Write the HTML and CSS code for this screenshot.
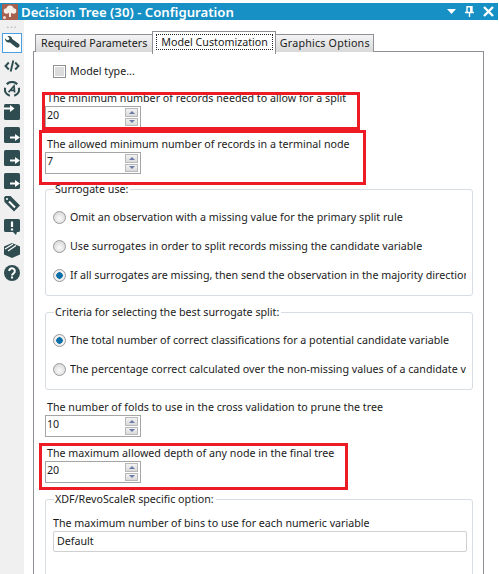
FILE: index.html
```html
<!DOCTYPE html>
<html lang="en">
<head>
<meta charset="utf-8">
<title>Decision Tree (30) - Configuration</title>
<link rel="stylesheet" href="styles.css">
</head>
<body>
<div class="window">
  <header class="titlebar">
    <svg class="logo" viewBox="0 0 16 16"><rect width="16" height="16" rx="1" fill="#a8604e"/><circle cx="8" cy="5" r="3.500" fill="#f4efe9"/><circle cx="4.500" cy="7" r="2.800" fill="#f4efe9"/><circle cx="11.500" cy="7" r="2.800" fill="#f4efe9"/><path d="M7 8h2v5H7z" fill="#f4efe9"/><circle cx="2.500" cy="13.500" r="1.500" fill="#e9dcd2"/></svg>
    <h1 class="title">Decision Tree (30) - Configuration</h1>
    <div class="winbtns">
      <svg width="9" height="5" viewBox="0 0 9 5"><path d="M0 0h9L4.500 5z" fill="#fff"/></svg>
      <svg width="9" height="11" viewBox="0 0 9 11"><path d="M2 .7h5v5.800H2zM0 6.500h9M4.500 7v4M5.700 1v5" stroke="#fff" stroke-width="1.400" fill="none"/></svg>
      <svg width="11" height="11" viewBox="0 0 11 11"><path d="M1 1l9 9M10 1l-9 9" stroke="#fff" stroke-width="2.400" fill="none"/></svg>
    </div>
  </header>
  <div class="body">
    <nav class="rail">
      <div class="grip">...</div>
      <div class="rail-btn active"><svg viewBox="0 0 16 16"><path d="M1 3.200L3 5.300 5 4.800 5.500 3 3.400 1.200C5.500.3 8 1.500 8.200 4L14.700 8.800C16 9.800 15.800 11.500 14.800 12.300 13.800 13 12.600 13 11.600 12L6 7.500C3.500 8 .8 6 1 3.200z" fill="#2f4d50"/></svg></div>
      <div class="rail-btn"><svg viewBox="0 0 16 16"><path d="M4.800 4.500L1.500 8l3.300 3.500M11.200 4.500L14.500 8l-3.300 3.500M9.300 2.500l-2.600 11" stroke="#2f4d50" stroke-width="1.900" fill="none"/></svg></div>
      <div class="rail-btn"><svg viewBox="0 0 16 16"><path d="M2.800 3.300A7 7 0 0 1 13.200 3.300M15 6.800A7 7 0 0 1 10.200 14.700M5.800 14.700A7 7 0 0 1 1 6.800" stroke="#2f4d50" stroke-width="2.200" fill="none"/><path d="M4.500 11.200L10 5l.6 6.500M6.500 9.300h4" stroke="#2f4d50" stroke-width="1.700" fill="none"/></svg></div>
      <div class="rail-btn"><svg viewBox="0 0 16 16"><rect width="16" height="16" rx="1.500" fill="#2f4d50"/><path d="M0 3.500h6V1l4.500 3.500L6 8V5.500H0z" fill="#fff"/></svg></div>
      <div class="rail-btn"><svg viewBox="0 0 16 16"><rect width="16" height="16" rx="1.500" fill="#2f4d50"/><path d="M6 9.500h5V7l5 3.500-5 3.500v-2.500H6z" fill="#fff"/></svg></div>
      <div class="rail-btn"><svg viewBox="0 0 16 16"><rect width="16" height="16" rx="1.500" fill="#2f4d50"/><path d="M6 9.500h5V7l5 3.500-5 3.500v-2.500H6z" fill="#fff"/></svg></div>
      <div class="rail-btn"><svg viewBox="0 0 16 16"><rect width="16" height="16" rx="1.500" fill="#2f4d50"/><path d="M6 9.500h5V7l5 3.500-5 3.500v-2.500H6z" fill="#fff"/></svg></div>
      <div class="rail-btn"><svg viewBox="0 0 16 16"><path d="M0 1.500L1.500 0h5l9.500 9.500L10 15.500.5 6z" fill="#2f4d50"/><path d="M5 5.500l6 6" stroke="#fff" stroke-width="2"/><circle cx="3" cy="3" r="1" fill="#fff"/></svg></div>
      <div class="rail-btn"><svg viewBox="0 0 16 16"><path d="M1.500 0h13A1.500 1.500 0 0 1 16 1.500v10a1.500 1.500 0 0 1-1.500 1.500H13l-1 3-3-3H1.500A1.500 1.500 0 0 1 0 11.500v-10A1.500 1.500 0 0 1 1.500 0z" fill="#2f4d50"/><path d="M8 2.500v5.500M8 9.500v2" stroke="#fff" stroke-width="2.200"/></svg></div>
      <div class="rail-btn"><svg viewBox="0 0 16 16"><path d="M8 1l8 3.500v8L8 16l-8-3.500v-8z" fill="#2f4d50"/><path d="M1 7l8-5M4 9l8-5.500" stroke="#fff" stroke-width="1.300"/></svg></div>
      <div class="rail-btn"><svg viewBox="0 0 16 16"><circle cx="8" cy="8" r="8" fill="#2f4d50"/><path d="M5.200 6a2.800 2.800 0 1 1 4.400 2.300C8.500 9 8 9.500 8 10.500" stroke="#fff" stroke-width="2" fill="none"/><rect x="7" y="11.500" width="2" height="2" fill="#fff"/></svg></div>
    </nav>
    <main class="content">
      <div class="tabs">
        <div class="tab">Required Parameters</div>
        <div class="tab selected"><span class="focus">Model Customization</span></div>
        <div class="tab last">Graphics Options</div>
      </div>
      <div class="panel">
        <label class="check-row"><span class="checkbox"></span>Model type...</label>

        <div class="field first"><div class="label">The minimum number of records needed to allow for a split</div>
          <div class="spinner"><span class="value">20</span><span class="arrows"><i class="up"></i><i class="down"></i></span></div></div>
        <div class="field second"><div class="label">The allowed minimum number of records in a terminal node</div>
          <div class="spinner"><span class="value">7</span><span class="arrows"><i class="up"></i><i class="down"></i></span></div></div>

        <section class="group surrogate">
          <div class="legend">Surrogate use:</div>
          <div class="radio"><span class="dot"></span><span class="clip">Omit an observation with a missing value for the primary split rule</span></div>
          <div class="radio"><span class="dot"></span><span class="clip">Use surrogates in order to split records missing the candidate variable</span></div>
          <div class="radio"><span class="dot on"></span><span class="clip">If all surrogates are missing, then send the observation in the majority direction</span></div>
        </section>

        <section class="group criteria">
          <div class="legend">Criteria for selecting the best surrogate split:</div>
          <div class="radio"><span class="dot on"></span><span class="clip">The total number of correct classifications for a potential candidate variable</span></div>
          <div class="radio"><span class="dot"></span><span class="clip">The percentage correct calculated over the non-missing values of a candidate variable</span></div>
        </section>

        <div class="field folds"><div class="label">The number of folds to use in the cross validation to prune the tree</div>
          <div class="spinner"><span class="value">10</span><span class="arrows"><i class="up"></i><i class="down"></i></span></div></div>
        <div class="field depth"><div class="label">The maximum allowed depth of any node in the final tree</div>
          <div class="spinner"><span class="value">20</span><span class="arrows"><i class="up"></i><i class="down"></i></span></div></div>

        <section class="group xdf">
          <div class="legend">XDF/RevoScaleR specific option:</div>
          <div class="xdf-label">The maximum number of bins to use for each numeric variable</div>
          <div class="textbox">Default</div>
        </section>
      </div>
      <div class="mark mark-a"></div>
      <div class="mark mark-b"></div>
      <div class="mark mark-c"></div>
    </main>
  </div>
</div>
</body>
</html>
```
FILE: styles.css
```css
html, body { margin: 0; padding: 0; height: 100%; overflow: hidden; background: #fff; }
body { font-family: "Noto Sans", "Liberation Sans", sans-serif; font-size: 10.700px; color: #1b1b1b; }
.window { height: 574px; width: 499px; display: flex; flex-direction: column; overflow: hidden; background: #fff; }
.titlebar { margin-top: 3px; height: 17px; margin-right: 1px; background: #1790c5; display: flex; align-items: center; padding: 0 0 0 2px; color: #fff; flex: none; }
.logo { width: 16px; height: 16px; flex: none; }
.title { font: 600 13.200px "Noto Sans", sans-serif; margin: 0 0 0 3px; flex: 1; white-space: nowrap; }
.winbtns { display: flex; gap: 9px; align-items: center; padding-right: 4px; }
.body { flex: 1; display: flex; min-height: 0; }
.rail { width: 24px; flex: none; background: #f0f0f0; display: flex; flex-direction: column; align-items: center; }
.grip { height: 13px; line-height: 8px; color: #a8a8a8; font-size: 10px; letter-spacing: 1px; }
.rail-btn { width: 18px; height: 18px; margin-bottom: 3px; display: flex; align-items: center; justify-content: center; border: 1px solid transparent; }
.rail-btn svg { width: 16px; height: 16px; flex: none; }
.rail-btn.active { border-color: #4a9fe0; background: #fff; }
.content { flex: 1; position: relative; padding: 11px 0 0 9px; min-width: 0; }
.tabs { display: flex; height: 20px; padding-left: 2px; position: relative; z-index: 1; }
.tab { height: 17px; margin-top: 3px; padding: 0 5px; line-height: 17px; border: 1px solid #8f8f96; border-bottom: 0; background: linear-gradient(#f4f4f4, #d8d8d8); white-space: nowrap; }
.tab.selected { height: 20px; margin: 0 0 0 -1px; background: #fff; padding: 2px 2px 0 3px; line-height: 14px; }
.tab.last { padding: 0 3px 0 4px; margin-left: -1px; letter-spacing: .2px; }
.focus { border: 1px dotted #222; padding: 0 4px; display: block; }
.panel { width: 451px; height: 523px; border: 1px solid #8f8f96; border-bottom: 0; overflow: hidden; padding: 0 0 0 11px; box-sizing: border-box; }
.check-row { display: flex; align-items: center; gap: 4px; height: 14px; margin: 12px 0 0 8px; }
.checkbox { width: 11px; height: 11px; border: 1px solid #8e8f8f; box-shadow: inset 0 0 0 1px #fff; background: #dcdcdc; display: block; flex: none; }
.field { display: flex; flex-direction: column; }
.label { height: 15px; line-height: 14px; white-space: nowrap; padding-left: 2px; }
.spinner { width: 94px; height: 20px; border: 1px solid #a5a5a5; display: flex; justify-content: space-between; }
.value { line-height: 17px; padding-left: 1px; }
.arrows { width: 13px; margin: 1px 2px 1px 0; display: flex; flex-direction: column; gap: 1px; }
.arrows i { flex: 1; background: linear-gradient(#f2f2f2, #dadada); border: 1px solid #b9b9b9; display: flex; align-items: center; justify-content: center; }
.arrows i::after { content: ""; border-left: 3px solid transparent; border-right: 3px solid transparent; }
.up::after { border-bottom: 3px solid #6d7ba6; }
.down::after { border-top: 3px solid #6d7ba6; }
.first { margin-top: 13px; }
.second { margin-top: 9px; }
.group { position: relative; border: 1px solid #d7dde2; border-radius: 3px; width: 428px; box-sizing: border-box; }
.legend { position: absolute; left: 8px; top: -8px; background: #fff; padding: 0 2px 0 1px; height: 14px; line-height: 14px; white-space: nowrap; }
.radio { display: flex; align-items: center; gap: 4px; height: 14px; margin-left: 7px; margin-bottom: 15px; }
.clip { white-space: nowrap; overflow: hidden; width: 396px; }
.dot { width: 11px; height: 11px; flex: none; border-radius: 50%; border: 1px solid #9a9a9a; background: radial-gradient(circle at 50% 60%, #fbfbfb, #cfcfcf); }
.dot.on { background: radial-gradient(circle, #0f6fa8 0 3px, #eeeeee 3.500px); }
.surrogate { margin-top: 15px; height: 107px; padding-top: 20px; }
.criteria { margin-top: 16px; height: 78px; padding-top: 20px; }
.folds { margin-top: 10px; }
.depth { margin-top: 9px; }
.xdf { margin-top: 16px; height: 90px; padding: 16px 7px 0; }
.xdf-label { height: 14px; line-height: 14px; white-space: nowrap; }
.textbox { height: 19px; line-height: 18px; border: 1px solid #d0d0d0; border-radius: 2px; padding-left: 3px; width: 409px; margin-top: 1px; }
.mark { position: absolute; border: 3px solid #ed1c24; box-sizing: border-box; z-index: 2; pointer-events: none; }
.mark-a { left: 18px; top: 72px; width: 318px; height: 38px; }
.mark-b { left: 15px; top: 110px; width: 327px; height: 55px; }
.mark-c { left: 15px; top: 423px; width: 309px; height: 47px; }
```
